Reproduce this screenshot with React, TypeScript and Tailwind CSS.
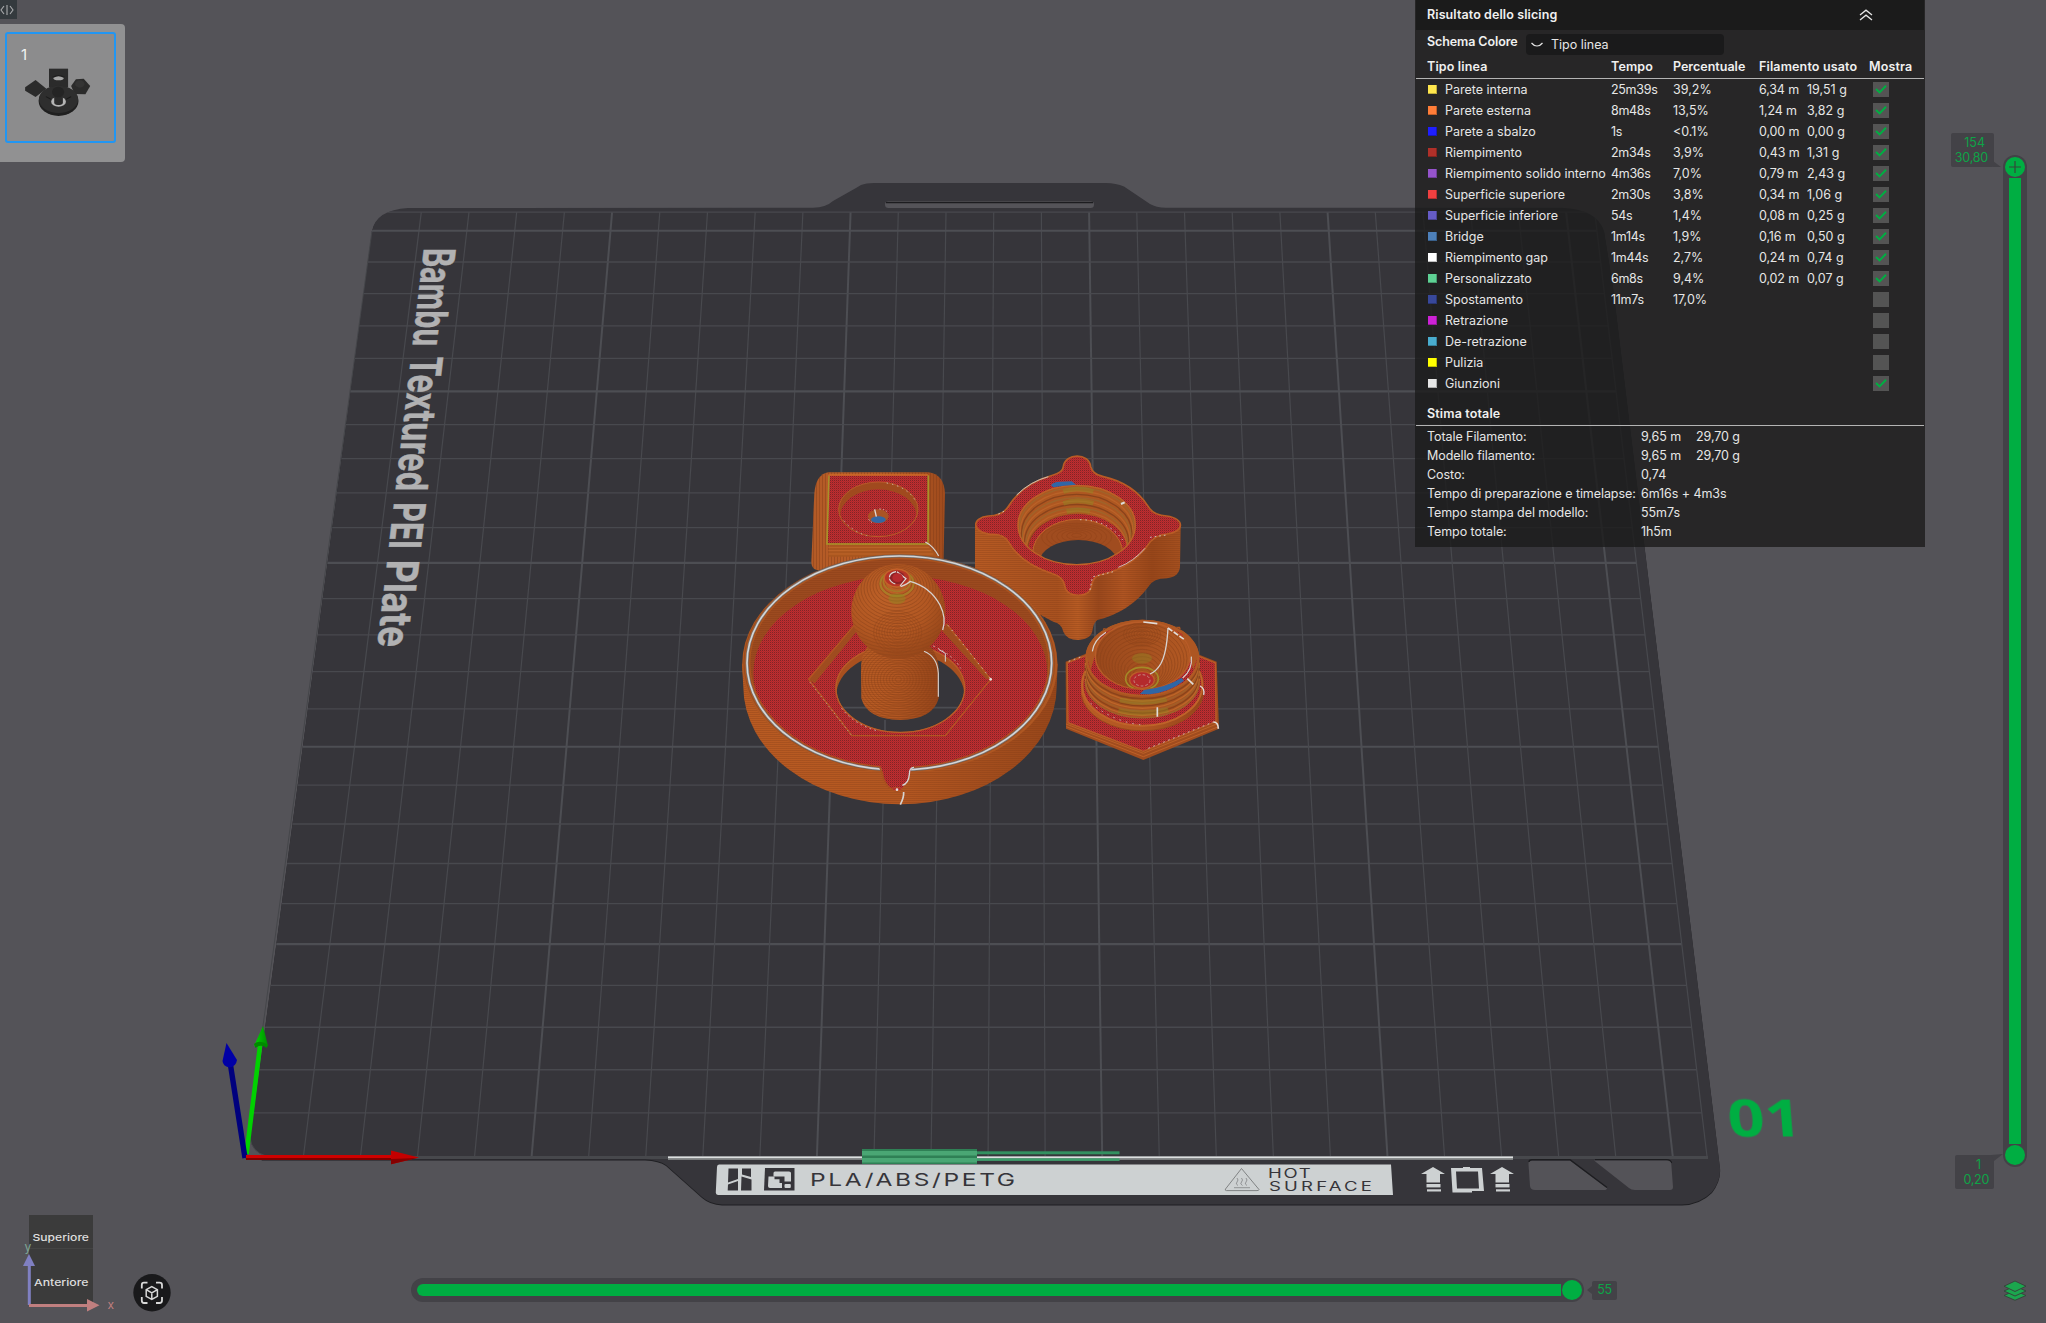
import React from "react";

const FONT = "font-['Inter','Liberation_Sans',sans-serif]";

/* ---------- Build plate ---------- */

const PLATE =
  "M372,231 Q376,210 408,208 L813,207.7 Q826,207.5 833,201 L856,188 L861,185 Q866,183 874,183 L1106,183 Q1116,183 1124,186.5 L1150,204 Q1156,207.7 1166,207.7 L1562,207.7 Q1597,209 1604,231 L1613,287 L1720,1168 Q1721,1180 1712,1192 Q1700,1204 1682,1204.5 L722,1204.5 Q710,1204 702,1197 L666,1165 Q659,1160 645,1159.5 L262,1159.5 Q248,1150 250,1140 Z";

function project(u: number, v: number): [number, number] {
  const w = 1 + 0.007665 * v;
  return [(246.3 + 57.06 * u + 7.836 * v) / w, (1156.7 - 35.27 * v) / w];
}

function Grid() {
  const lines: React.ReactNode[] = [];
  const marks = [...Array(26).keys(), 25.6];
  marks.forEach((m) => {
    const bold = m % 5 === 0 && m > 0;
    const [ax, ay] = project(m, 0);
    const [bx, by] = project(m, 25.6);
    if (m > 0)
      lines.push(
        <line key={`v${m}`} x1={ax} y1={ay} x2={bx} y2={by} stroke={bold ? "#4d4e53" : "#48494e"} strokeWidth={bold ? 2 : 1.2} />
      );
    const [cx, cy] = project(0, m);
    const [dx] = project(25.6, m);
    lines.push(
      <line key={`h${m}`} x1={cx} y1={cy} x2={dx} y2={cy} stroke={bold ? "#4d4e53" : "#48494e"} strokeWidth={bold ? 2.2 : 1.3} />
    );
  });
  return <g>{lines}</g>;
}

/* Words of the plate label: offset along the baseline and length. */
const LABEL: [string, number, number][] = [
  ["Bambu", 0, 99],
  ["Textured", 109, 136],
  ["PEI", 256, 47],
  ["Plate", 314, 88],
];

function Plate() {
  return (
    <g>
      <path d={PLATE} transform="translate(0,1)" fill="#1f1f22" />
      <path d={PLATE} fill="#36353a" />
      <path d="M372,231 L245,1157" stroke="#45464a" strokeWidth="1" />
      <path d="M250,1138 Q252,1152 266,1156 L246,1156 Z" fill="#545358" stroke="#46474b" />
      <g clipPath="url(#plate-clip)">
        <Grid />
      </g>
      <rect x="885" y="201" width="209" height="7" rx="3.5" fill="#545358" />
      <path d="M886,202.5 H1093" stroke="#1c1c1f" strokeWidth="1.6" />

      <g
        transform="matrix(-0.1165 0.993 -1 0 424 248)"
        fontFamily="Inter, sans-serif"
        fontWeight="700"
        fontSize="44"
        fill="#b1b1b2"
        stroke="#b1b1b2"
        strokeWidth="0.5"
      >
        {LABEL.map(([word, x, len]) => (
          <text key={word} x={x} y="0" textLength={len} lengthAdjust="spacingAndGlyphs">{word}</text>
        ))}
      </g>

      <path d="M245,1157.5 H1708" stroke="#47484c" strokeWidth="3" />
      <rect x="668" y="1156.4" width="845" height="2" fill="#dcdfdf" />
      <rect x="668" y="1158.4" width="845" height="1.4" fill="#8d9090" />

      <path d="M719,1164.5 H1391 L1393,1195 H718 Q715.5,1195 715.8,1192 L717,1167 Q717,1164.5 719,1164.5Z" fill="#cdd1d2" />
      <g fill="#36353a">
        <path d="M728.5,1168.5 H738 V1179 L728,1182.5Z M728,1184.5 L738,1181 V1190.5 H727.7Z M742,1168.5 H751 V1177 L742,1174.5Z M741.5,1176.5 L751.5,1179.5 V1190.5 H741Z" />
        <path d="M765,1168 H794.5 V1190.5 H764Z" />
      </g>
      <path d="M775,1171.5 H789 Q791,1171.5 791,1173 V1181.5 H784.5 V1176.5 H773.5 V1173 Q773.5,1171.5 775,1171.5Z" fill="#cdd1d2" />
      <path d="M768.5,1176.5 H774.5 V1179.3 H779.5 V1183 H782 V1188 H770 Q768,1188 768,1186Z" fill="#cdd1d2" />
      <rect x="784.5" y="1184" width="6.3" height="4" rx="1" fill="#cdd1d2" />
      <g fontFamily="Inter, sans-serif" fill="#36353a">
        <text transform="matrix(1.4 0 0 1 810 1186)" fontSize="17.5" textLength="146.5">PLA/ABS/PETG</text>
        <text transform="matrix(1.45 0 0 1 1268 1178.3)" fontSize="12.8" textLength="29.5">HOT</text>
        <text transform="matrix(1.45 0 0 1 1269 1190.6)" fontSize="12.8" textLength="71">SURFACE</text>
      </g>
      <g fill="none" stroke="#77797b" strokeWidth="0.9">
        <path d="M1241.5,1168.5 L1259,1189.5 Q1259,1190.6 1257,1190.6 H1226.5 Q1224.5,1190.4 1225.5,1189Z" />
        <path d="M1237,1178 q2,2 0,4 t1,3.5 M1241.5,1178 q2,2 0,4 t1,3.5 M1246,1178 q2,2 0,4 t1,3.5 M1234,1187.7 H1250" strokeWidth="0.7" />
      </g>
      <g fill="#cdd1d2">
        {[1433, 1502].map((x) => (
          <g key={x}>
            <path d={`M${x},1167 L${x + 12},1174 H${x + 7} V1182.5 H${x - 6.5} V1174 H${x - 12}Z`} />
            <rect x={x - 6.5} y="1184" width="14" height="3.4" />
            <rect x={x - 6} y="1189.3" width="14" height="2.2" />
          </g>
        ))}
        <path fillRule="evenodd" d="M1451,1168 H1463 V1167 H1470 V1168 H1482 L1484,1191 H1472 V1192.4 H1452.5Z M1456,1171.5 L1457,1188.5 H1479 L1478,1171.5Z" />
      </g>
      <path d="M1530,1160.5 H1570 L1607,1188 Q1607,1190 1604,1190 H1535 Q1530.5,1190 1530,1186 L1528.5,1164 Q1528.5,1160.5 1530,1160.5Z" fill="#545358" />
      <path d="M1529,1162 Q1529,1159.8 1532,1159.8 H1570 L1607,1187.5 M1595,1159.8 H1666 Q1671,1159.8 1671.5,1163" fill="none" stroke="#1d1d20" strokeWidth="1.4" />
      <path d="M1594,1160.5 H1667 Q1671,1160.5 1671.3,1164 L1673,1187 Q1673,1190 1670,1190 H1635 Q1631,1190 1629,1188Z" fill="#545358" />

      <rect x="862" y="1149" width="115" height="15" fill="#2f8055" />
      <rect x="862" y="1151" width="115" height="4.5" fill="#4aa674" />
      <rect x="862" y="1158" width="115" height="4.5" fill="#4aa674" />
      <rect x="977" y="1151.3" width="142.5" height="3" fill="#339060" />
      <rect x="977" y="1158.3" width="142.5" height="2.6" fill="#3f9d6c" />

      <text
        transform="matrix(1 0 0.08 1 1729 1136.5)"
        fontFamily="Open Sans, sans-serif"
        fontWeight="700"
        fontSize="51"
        textLength="74"
        lengthAdjust="spacingAndGlyphs"
        fill="#00ae42"
        className="blur-[0.6px]"
      >
        01
      </text>
    </g>
  );
}

function Axes() {
  return (
    <g>
      <path d="M246.5,1154 L260,1046" stroke="#00d200" strokeWidth="4.6" />
      <path d="M263,1026 L268,1046 L254,1046 Z" fill="url(#green-tip)" />
      <path d="M254,1044 Q260,1039 268,1045 L266.5,1048 Q261,1043 255.5,1048Z" fill="#008a00" />
      <path d="M245,1158 L230.5,1065" stroke="#00007e" strokeWidth="5.4" />
      <path d="M226.5,1043 L237,1060 Q236,1067 229,1067.5 Q223,1066 222.5,1061 Z" fill="#0000a6" />
      <rect x="246" y="1155" width="146" height="5" fill="#d00000" />
      <rect x="246" y="1158" width="146" height="2" fill="#7c0000" />
      <path d="M391,1150.5 L419,1157.5 L391,1164.3 Z" fill="#c40000" />
      <path d="M391,1159 L417,1158 L391,1164.3 Z" fill="#850000" />
    </g>
  );
}

/* ---------- Sliced models (drawn in a 3x local space) ---------- */

const RING_TOP =
  "M1030,80 C1035,38 1108,38 1112,80 Q1118,103 1150,110 Q1240,130 1285,200 Q1300,226 1340,228 C1396,236 1394,276 1340,282 Q1300,285 1280,320 Q1230,385 1140,405 Q1118,410 1114,440 C1110,475 1040,475 1035,440 Q1030,410 1000,402 Q900,370 865,305 Q850,280 810,283 C752,275 756,232 805,228 Q850,228 868,195 Q910,130 1000,105 Q1028,98 1030,80Z";

const RING_BODY =
  "M765,250 L765,420 L1000,545 Q1025,550 1030,575 Q1040,600 1075,600 Q1115,598 1118,568 Q1120,550 1132,540 Q1230,515 1285,440 Q1300,415 1340,415 Q1378,410 1380,380 L1382,255Z";

const BOX_BODY =
  "M325,97 H625 Q672,103 675,160 L670,390 H290 Q274,385 274,365 L283,160 Q288,103 325,97Z";

const DISH_BODY = "M66,672 L70,740 A470 353 0 0 0 1010,740 L1013,672Z";

const POST = "M442,620 Q422,650 423,690 L424,775 Q440,838 540,840 Q640,838 656,775 L656,690 Q656,650 632,620Z";

function Rings({ cx, cy, n, rx, ry, drift, color, sw }: { cx: number; cy: number; n: number; rx: number; ry: number; drift: number; color: string; sw: number }) {
  return (
    <g fill="none" stroke={color} strokeWidth={sw}>
      {Array.from({ length: n }, (_, i) => (
        <ellipse key={i} cx={cx} cy={cy + drift * (i + 1)} rx={rx * (i + 1)} ry={ry * (i + 1)} />
      ))}
    </g>
  );
}

function Models() {
  return (
    <g transform="translate(720,440) scale(0.33333)">
      {/* rounded box */}
      <path d={BOX_BODY} fill="url(#wall)" />
      <path d={BOX_BODY} fill="url(#vlines)" />
      <path d="M330,314 H622 L655,350 H325Z" fill="#a9561f" />
      <path d="M325,322 H628 M325,332 H634 M325,342 H640" stroke="#c0652a" strokeWidth="3" />
      <path d="M325,106 H622 L625,310 H322Z" fill="url(#red)" />
      <path d="M327,106 L321,312 H624 L625,106" fill="none" stroke="#a7922a" strokeWidth="5" />
      <path d="M325,105 H624" stroke="#cf6a28" strokeWidth="4" />
      <ellipse cx="475" cy="208" rx="119" ry="82" fill="#a04a1e" stroke="#b85a28" strokeWidth="3" />
      <g clipPath="url(#recess)">
        <ellipse cx="475" cy="230" rx="115" ry="82" fill="url(#red)" />
      </g>
      <path d="M500,129 Q560,140 585,180 M372,242 Q400,275 440,287" fill="none" stroke="#cfc9c6" strokeWidth="2.5" strokeDasharray="4 12" />
      <ellipse cx="475" cy="229" rx="31" ry="21" fill="#aa5424" />
      <ellipse cx="475" cy="239" rx="22" ry="10" fill="#3467a3" />
      <path d="M464,208 L469,230" stroke="#e0dcda" strokeWidth="4" />
      <path d="M446,238 Q452,248 462,249 M478,207 Q500,208 504,220" fill="none" stroke="#d9cfcb" strokeWidth="2.5" strokeDasharray="4 6" />
      <path d="M616,306 Q640,318 656,348" fill="none" stroke="#d4d2d0" strokeWidth="4" />

      {/* lobed ring */}
      <path d={RING_BODY} fill="url(#ringwall)" />
      <path d={RING_BODY} fill="url(#hlines)" />
      <path d={RING_TOP} fill="url(#red)" stroke="#b95b25" strokeWidth="5" />
      <path d="M890,165 Q930,125 985,110 M1195,382 Q1240,365 1275,325" fill="none" stroke="#d4d2d0" strokeWidth="2.5" />
      <path d="M1120,410 L1180,395 M1110,450 L1117,412 M835,222 L860,210 M1290,292 L1340,285" fill="none" stroke="#d6d2d0" strokeWidth="2.5" strokeDasharray="5 9" />
      <ellipse cx="1070" cy="255" rx="177" ry="120" fill="#ad5721" />
      <g clipPath="url(#bore)">
        <g fill="none" strokeWidth="4">
          {[0, 9, 18, 27, 36, 45, 54, 63, 72].map((d, i) => (
            <ellipse key={d} cx="1070" cy={262 + d} rx={172 - d * 0.35} ry={119 - d * 0.12} stroke={i % 3 === 2 ? "#8a431b" : i % 3 === 1 ? "#ba6228" : "#9f632a"} />
          ))}
        </g>
        <path d="M1030,155 Q1072,138 1120,155 M1030,190 Q1072,175 1120,190 M1040,215 Q1072,205 1110,215" fill="none" stroke="#8f8a24" strokeWidth="14" opacity=".45" />
        <ellipse cx="1073" cy="330" rx="148" ry="108" fill="url(#red)" />
        <ellipse cx="1073" cy="340" rx="135" ry="102" fill="#a04c1f" stroke="#c0662a" strokeWidth="3" />
        <Rings cx={1070} cy={285} n={7} rx={15} ry={6} drift={1} color="#8f431b" sw={1.5} />
        <ellipse cx="1075" cy="366" rx="116" ry="66" fill="#36353a" />
      </g>
      <ellipse cx="1070" cy="255" rx="176" ry="119" fill="none" stroke="#bd6228" strokeWidth="4" />
      <path d="M1080,239 Q1165,240 1208,300" fill="none" stroke="#d5cfcc" strokeWidth="3" strokeDasharray="4 12" />
      <path d="M993,136 Q1000,125 1020,125 L1055,124 L1068,134 Q1030,136 1000,142Z" fill="#2f66a5" />
      <path d="M1203,192 L1214,187" stroke="#dedede" strokeWidth="6" />

      {/* large dish */}
      <path d={DISH_BODY} fill="url(#dishwall)" />
      <path d={DISH_BODY} fill="url(#hlines)" />
      <ellipse cx="539.5" cy="672" rx="473" ry="327" fill="#ae5722" />
      <ellipse cx="538" cy="669" rx="466" ry="325" fill="none" stroke="#8c461d" strokeWidth="2" />
      <ellipse cx="538" cy="669" rx="452" ry="317" fill="#9c4a1f" />
      <g clipPath="url(#dish)">
        <ellipse cx="538" cy="669" rx="452" ry="317" fill="url(#hlines)" />
        <ellipse cx="541" cy="699" rx="441" ry="291" fill="url(#red)" />
      </g>
      <ellipse cx="538" cy="669" rx="449" ry="314" fill="none" stroke="#ac541f" strokeWidth="4" />
      <ellipse cx="538" cy="669" rx="457" ry="321" fill="none" stroke="#747170" strokeWidth="9" />
      <ellipse cx="538" cy="669" rx="457" ry="321" fill="none" stroke="#d6d6d6" strokeWidth="5" />
      <path d="M480,970 L487,1000 Q496,1045 531,1052 Q552,1045 552,1035 Q567,1028 567,1008 L580,970Z" fill="url(#red)" />
      <path d="M480,982 L487,1000 Q494,1045 531,1054 L545,1048" fill="none" stroke="#a9501f" strokeWidth="5" />
      <path d="M582,982 Q568,982 568,1003 Q566,1030 547,1036" fill="none" stroke="#d4d4d4" strokeWidth="4" />
      <ellipse cx="531" cy="1047" rx="14" ry="5" fill="#b0282c" stroke="#b85c28" strokeWidth="2" />
      <circle cx="531" cy="1049" r="4" fill="#e4dede" />
      <path d="M551,1056 Q552,1072 541,1094" fill="none" stroke="#d6d4d2" strokeWidth="5" />

      <path d="M264,718 L402,556 L415,568 L284,730Z" fill="#9f4c1f" />
      <path d="M814,718 L680,550 L666,572 L798,716Z" fill="#9f4c1f" />
      <path d="M402,556 L266,718 L396,887 H676 L812,718 L680,552" fill="none" stroke="#b45522" strokeWidth="4" />
      <path d="M270,727 L396,888" stroke="#c9a79c" strokeWidth="2.5" strokeDasharray="4 9" />
      <path d="M684,556 L812,716" stroke="#cdbbb4" strokeWidth="3" strokeDasharray="4 14" />
      <circle cx="812" cy="718" r="4" fill="#e8e4e2" />
      <ellipse cx="541" cy="745" rx="195" ry="133" fill="#a8501f" />
      <g clipPath="url(#hole)">
        <ellipse cx="541" cy="766" rx="192" ry="130" fill="#36353a" />
        <path d="M495,840 V880 M350,803 H735" stroke="#4b4c51" strokeWidth="5" />
      </g>
      <ellipse cx="541" cy="745" rx="193" ry="132" fill="none" stroke="#b95c28" strokeWidth="4" />
      <path d="M640,618 Q700,645 722,685 M365,805 Q400,852 470,872" fill="none" stroke="#cdc5c1" strokeWidth="3" strokeDasharray="4 11" />
      <path d="M656,628 L676,640 V665" fill="none" stroke="#d4d4d4" strokeWidth="3" />

      <path d={POST} fill="url(#post)" />
      <g clipPath="url(#postclip)">
        <Rings cx={535} cy={718} n={16} rx={9} ry={8} drift={0} color="#8f451b" sw={1.4} />
        <path d={POST} fill="url(#hlines)" />
      </g>
      <path d="M612,634 Q652,650 655,700 V770" fill="none" stroke="#d3d0ce" strokeWidth="3.5" />
      <ellipse cx="535" cy="514" rx="141" ry="142" fill="url(#ball)" />
      <g clipPath="url(#ballclip)">
        <Rings cx={531} cy={416} n={24} rx={9} ry={7} drift={2.6} color="#90461c" sw={1.8} />
        <Rings cx={533} cy={577} n={9} rx={8} ry={7} drift={0} color="#90461c" sw={1.4} />
        <ellipse cx="531" cy="430" rx="50" ry="38" fill="none" stroke="#a08a28" strokeWidth="6" opacity=".7" />
        <ellipse cx="531" cy="424" rx="41" ry="30" fill="none" stroke="#a87f28" strokeWidth="5" opacity=".8" />
        <ellipse cx="531" cy="476" rx="26" ry="16" fill="#8f8a22" opacity=".45" />
      </g>
      <ellipse cx="531" cy="414" rx="38" ry="27" fill="#b73426" stroke="#c4622a" strokeWidth="4" />
      <ellipse cx="531" cy="413" rx="24" ry="19" fill="#8c2226" />
      <path d="M531,395 L558,416 L540,438 M508,412 Q510,398 528,395 M508,416 Q512,428 526,432" fill="none" stroke="#dddcda" strokeWidth="3.5" />
      <ellipse cx="533" cy="413" rx="16" ry="13" fill="#b72a2e" />
      <path d="M542,440 Q566,430 570,424 Q630,440 660,495 Q680,535 668,570" fill="none" stroke="#d6d3d1" strokeWidth="4" />

      {/* threaded cup on hex base */}
      <path d="M1037,665 L1265,575 L1490,665 L1497,866 L1270,960 L1038,866Z" fill="#a04c1e" />
      <path d="M1038,852 L1270,940 L1495,850 M1039,860 L1270,950 L1496,860" fill="none" stroke="#bd6028" strokeWidth="3" />
      <path d="M1042,669 L1265,580 L1486,669 L1488,845 L1270,934 L1044,848Z" fill="url(#red)" stroke="#b95c28" strokeWidth="4" />
      <path d="M1285,925 L1480,846 M1046,664 L1090,648" stroke="#cbb9b3" strokeWidth="3" strokeDasharray="5 11" />
      <path d="M1480,846 Q1495,846 1495,866" fill="none" stroke="#e2dfdd" strokeWidth="5" />
      <path d="M1083,735 A184 130 0 0 1 1451,735 L1450,765 A184 120 0 0 1 1084,765Z" fill="url(#post)" />
      <path d="M1084,765 A184 120 0 0 0 1450,765" fill="none" stroke="#9a491c" strokeWidth="3" />
      <ellipse cx="1267" cy="735" rx="180" ry="122" fill="url(#red)" stroke="#bf6329" strokeWidth="6" />
      <path d="M1112,790 Q1190,850 1270,855" fill="none" stroke="#cfbab3" strokeWidth="3" strokeDasharray="4 16" />
      <path d="M1440,738 Q1455,744 1451,765" fill="none" stroke="#dddddd" strokeWidth="4" />
      <path d="M1096,655 L1094,715 Q1110,830 1267,833 Q1430,830 1441,715 L1438,655Z" fill="#a85420" />
      <g fill="none" strokeWidth="4">
        {[0, 8, 16, 24, 32, 40, 48, 56, 64].map((d, i) => (
          <path key={d} d={`M1096,${660 + d} A171 ${116 - d * 0.1} 0 0 0 1438,${660 + d}`} stroke={i % 3 === 0 ? "#8a431b" : i % 3 === 1 ? "#bd6629" : "#a0602a"} />
        ))}
      </g>
      <path d="M1200,780 Q1270,796 1340,778 M1195,812 Q1270,828 1345,810" fill="none" stroke="#8f8a24" strokeWidth="15" opacity=".4" />
      <ellipse cx="1267" cy="654" rx="171" ry="115" fill="#b15a24" />
      <ellipse cx="1267" cy="656" rx="163" ry="108" fill="url(#red)" />
      <path d="M1098,640 A170 113 0 0 1 1436,640 L1420,690 L1380,560 L1150,565 L1112,690Z" fill="#ad5622" />
      <ellipse cx="1268" cy="647" rx="142" ry="101" fill="url(#cup)" stroke="#b85c28" strokeWidth="4" />
      <g clipPath="url(#cupclip)">
        <Rings cx={1266} cy={716} n={18} rx={9} ry={7} drift={-4} color="#8a431b" sw={1.6} />
        <Rings cx={1266} cy={583} n={7} rx={8} ry={5} drift={0} color="#8a431b" sw={1.4} />
        <ellipse cx="1266" cy="655" rx="30" ry="16" fill="#8f8a22" opacity=".4" />
        <ellipse cx="1266" cy="716" rx="49" ry="34" fill="none" stroke="#a38a27" strokeWidth="5" />
      </g>
      <ellipse cx="1266" cy="720" rx="37" ry="25" fill="#b42a2c" stroke="#bd5e28" strokeWidth="4" />
      <ellipse cx="1266" cy="721" rx="24" ry="17" fill="none" stroke="#c99f95" strokeWidth="2.5" strokeDasharray="8 6" />
      <path d="M1260,762 L1272,750 Q1340,742 1384,714 L1392,722 Q1350,755 1290,763Z" fill="#2f66a5" />
      <path d="M1344,564 Q1340,640 1322,672 Q1308,695 1290,702" fill="none" stroke="#d6d3d1" strokeWidth="4" />
      <path d="M1344,564 L1392,598" stroke="#e0dddb" strokeWidth="5" strokeDasharray="16 5" />
      <path d="M1270,546 L1312,551 M1312,802 V830 M1402,716 L1420,733" stroke="#e0dddb" strokeWidth="5" />
      <path d="M1117,634 Q1122,600 1158,577 M1414,650 Q1418,690 1388,714" fill="none" stroke="#d6d3d1" strokeWidth="3.5" />
    </g>
  );
}

function Defs() {
  return (
    <defs>
      <clipPath id="plate-clip"><path d={PLATE} /></clipPath>
      <clipPath id="recess"><ellipse cx="475" cy="208" rx="117" ry="80" /></clipPath>
      <clipPath id="bore"><ellipse cx="1070" cy="255" rx="176" ry="119" /></clipPath>
      <clipPath id="dish"><ellipse cx="538" cy="669" rx="452" ry="317" /></clipPath>
      <clipPath id="hole"><ellipse cx="541" cy="745" rx="192" ry="131" /></clipPath>
      <clipPath id="postclip"><path d={POST} /></clipPath>
      <clipPath id="ballclip"><ellipse cx="535" cy="514" rx="140" ry="141" /></clipPath>
      <clipPath id="cupclip"><ellipse cx="1268" cy="647" rx="140" ry="99" /></clipPath>
      <pattern id="red" width="6" height="6" patternUnits="userSpaceOnUse">
        <rect width="6" height="6" fill="#c02d2f" />
        <rect width="3" height="3" fill="#802427" />
        <rect x="3" y="3" width="3" height="3" fill="#ab2a2d" />
      </pattern>
      <pattern id="hlines" width="6" height="6" patternUnits="userSpaceOnUse">
        <rect width="6" height="3" fill="#7c3a16" opacity=".28" />
      </pattern>
      <pattern id="vlines" width="9" height="9" patternUnits="userSpaceOnUse">
        <rect width="3" height="9" fill="#7c3a16" opacity=".4" />
      </pattern>
      <linearGradient id="wall"><stop offset="0" stopColor="#b35a26" /><stop offset=".5" stopColor="#b95e27" /><stop offset="1" stopColor="#a04b1d" /></linearGradient>
      <linearGradient id="ringwall"><stop offset="0" stopColor="#b65a23" /><stop offset=".4" stopColor="#a8511f" /><stop offset=".5" stopColor="#b85c24" /><stop offset=".6" stopColor="#9a481c" /><stop offset=".72" stopColor="#b05522" /><stop offset=".86" stopColor="#984619" /><stop offset="1" stopColor="#a5501f" /></linearGradient>
      <linearGradient id="dishwall"><stop offset="0" stopColor="#b95b22" /><stop offset=".5" stopColor="#b35721" /><stop offset="1" stopColor="#97461a" /></linearGradient>
      <linearGradient id="post"><stop offset="0" stopColor="#b95c24" /><stop offset=".5" stopColor="#b05622" /><stop offset="1" stopColor="#96451a" /></linearGradient>
      <radialGradient id="ball" cx=".4" cy=".35" r=".7"><stop offset="0" stopColor="#bd6128" /><stop offset=".6" stopColor="#b15722" /><stop offset="1" stopColor="#944519" /></radialGradient>
      <linearGradient id="cup"><stop offset="0" stopColor="#99481c" /><stop offset="1" stopColor="#b25923" /></linearGradient>
      <linearGradient id="green-tip"><stop offset="0" stopColor="#00d800" /><stop offset="1" stopColor="#008c00" /></linearGradient>
    </defs>
  );
}

/* ---------- Slicing result panel ---------- */

type Row = [string, string, string, string, string, string, boolean];

const ROWS: Row[] = [
  ["#ffe64d", "Parete interna", "25m39s", "39,2%", "6,34 m", "19,51 g", true],
  ["#ff7d38", "Parete esterna", "8m48s", "13,5%", "1,24 m", "3,82 g", true],
  ["#1f1fff", "Parete a sbalzo", "1s", "<0.1%", "0,00 m", "0,00 g", true],
  ["#b03029", "Riempimento", "2m34s", "3,9%", "0,43 m", "1,31 g", true],
  ["#9654cc", "Riempimento solido interno", "4m36s", "7,0%", "0,79 m", "2,43 g", true],
  ["#f04040", "Superficie superiore", "2m30s", "3,8%", "0,34 m", "1,06 g", true],
  ["#665cc7", "Superficie inferiore", "54s", "1,4%", "0,08 m", "0,25 g", true],
  ["#4d80ba", "Bridge", "1m14s", "1,9%", "0,16 m", "0,50 g", true],
  ["#ffffff", "Riempimento gap", "1m44s", "2,7%", "0,24 m", "0,74 g", true],
  ["#5ed194", "Personalizzato", "6m8s", "9,4%", "0,02 m", "0,07 g", true],
  ["#38489b", "Spostamento", "11m7s", "17,0%", "", "", false],
  ["#cd22d6", "Retrazione", "", "", "", "", false],
  ["#49adcf", "De-retrazione", "", "", "", "", false],
  ["#ffff00", "Pulizia", "", "", "", "", false],
  ["#e6e6e6", "Giunzioni", "", "", "", "", true],
];

const TOTALS: [string, string, string][] = [
  ["Totale Filamento:", "9,65 m", "29,70 g"],
  ["Modello filamento:", "9,65 m", "29,70 g"],
  ["Costo:", "0,74", ""],
  ["Tempo di preparazione e timelapse:", "6m16s + 4m3s", ""],
  ["Tempo stampa del modello:", "55m7s", ""],
  ["Tempo totale:", "1h5m", ""],
];

function ResultPanel() {
  return (
    <section className="absolute left-[1415px] top-0 h-[547px] w-[510px] whitespace-nowrap bg-[#1b1b1b]/80 text-[12.5px] text-[#e6e6e6]">
      <header className="mx-px flex h-[30px] items-center justify-between bg-[#1b1b1b] pl-[11px] pr-[51px] font-semibold tracking-[0.1px] text-[#f0f0f0]">
        <span>Risultato dello slicing</span>
        <svg width="14" height="12" viewBox="0 0 14 12" fill="none" stroke="#e4e4e4" strokeWidth="1.3">
          <path d="M1,6 L7,1.2 L13,6 M1,11 L7,6.2 L13,11" />
        </svg>
      </header>
      <div className="flex h-[27px] pl-3 pt-1">
        <span className="-mt-px h-[17px] w-[99px] font-semibold leading-[17px] tracking-[-0.1px] text-[#f0f0f0]">Schema Colore</span>
        <div className="flex h-[21px] w-[198px] items-center rounded bg-[#1a1a1b] pl-[5px] pt-px">
          <svg width="12" height="6" viewBox="0 0 12 6" fill="none" stroke="#e4e4e4" strokeWidth="1.2">
            <path d="M0.5,1 Q3,4 6,4 T11.5,1" />
          </svg>
          <span className="ml-2">Tipo linea</span>
        </div>
      </div>
      <div className="mx-px grid h-[22px] grid-cols-[184px_62px_86px_110px_1fr] items-center border-b border-[#b4b4b4] pl-[11px] font-semibold tracking-[0.15px] text-[#f0f0f0]">
        <span>Tipo linea</span>
        <span>Tempo</span>
        <span className="tracking-normal">Percentuale</span>
        <span>Filamento usato</span>
        <span>Mostra</span>
      </div>
      <div>
        {ROWS.map(([color, name, time, pct, len, weight, on]) => (
          <div key={name} className="grid h-[21px] grid-cols-[17px_166px_62px_86px_48px_66px_16px] items-center pl-[13px]">
            <i className="size-[9px] border-b border-r border-black/25" style={{ backgroundColor: color }} />
            <span className="pt-px">{name}</span>
            <span className="pt-px tracking-[-0.3px]">{time}</span>
            <span className="pt-px">{pct}</span>
            <span className="pt-px tracking-[-0.15px]">{len}</span>
            <span className="pt-px">{weight}</span>
            <i className="flex h-[15px] w-4 items-center justify-center bg-[#545454]">
              {on && (
                <svg width="12" height="9" viewBox="0 0 12 9" fill="none" stroke="#00ae42" strokeWidth="2">
                  <path d="M1,4 L4.6,7.4 L11,0.8" />
                </svg>
              )}
            </i>
          </div>
        ))}
      </div>
      <div className="mx-px mt-px flex h-[31px] items-center border-b border-[#b4b4b4] pl-[11px] pt-2 font-semibold tracking-[0.15px] text-[#f0f0f0]">Stima totale</div>
      <div className="pt-[2px]">
        {TOTALS.map(([label, a, b]) => (
          <div key={label} className="flex h-[19px] items-center pl-3 tracking-[-0.07px]">
            <span className="w-[214px]">{label}</span>
            <span className={b ? "w-[55px]" : ""}>{a}</span>
            <span>{b}</span>
          </div>
        ))}
      </div>
    </section>
  );
}

/* ---------- Overlays ---------- */

function PlateThumbnail() {
  return (
    <>
      <div className="absolute left-0 top-0 flex h-[19px] w-[17px] items-center bg-[#343a3e]">
        <svg width="14" height="12" viewBox="0 0 14 12" fill="none" stroke="#a9abad" strokeWidth="1.1">
          <path d="M4,2 L1,6 L4,10 M7,1 V11 M10,2 L13,6 L10,10" />
        </svg>
      </div>
      <div className="absolute left-0 top-6 h-[138px] w-[125px] rounded-r bg-[#919192] pl-[5px] pt-2">
        <div className="h-[111px] w-[111px] rounded-[3px] border-2 border-[#2196f3] bg-[#8c8c8d]">
          <svg width="106" height="106" viewBox="7 34 106 106">
            <text x="21" y="59.5" fontFamily="Inter, sans-serif" fontSize="15" fill="#f2f2f2">1</text>
            <g transform="scale(0.43365,0.33333)" fill="#2b2b2b">
              <path d="M113,206 H157 V262 H113Z" />
              <path d="M58,262 L82,240 L107,266 L82,291 L58,272Z" />
              <path d="M164,258 L175,238 L193,236 L208,258 L197,283 L172,282Z" />
              <ellipse cx="135" cy="234" rx="12" ry="7" fill="#a5a5a5" />
              <path d="M122,232 Q135,222 148,232" stroke="#1d1d1d" strokeWidth="4" fill="none" />
              <ellipse cx="135" cy="303" rx="46" ry="45" fill="#202020" />
              <ellipse cx="135" cy="298" rx="45" ry="41" fill="#2e2e2e" />
              <ellipse cx="135" cy="305" rx="17" ry="15" fill="#b5b5b5" />
              <rect x="125" y="285" width="20" height="30" rx="8" />
              <ellipse cx="134" cy="276" rx="14" ry="16" fill="#242424" />
              <path d="M118,298 L106,290 M152,298 L164,290" stroke="#1a1a1a" strokeWidth="3" />
              <circle cx="184" cy="252" r="11" fill="#343434" />
            </g>
          </svg>
        </div>
      </div>
    </>
  );
}

function LayerSlider() {
  return (
    <>
      <div className="absolute left-[2003px] top-[155px] flex h-[1012px] w-6 flex-col items-center rounded-full bg-[#434247] py-0.5">
        <span className="flex size-5 shrink-0 items-center justify-center rounded-full bg-[#00ae42]">
          <svg width="12" height="12" viewBox="0 0 12 12" stroke="#35463a" strokeWidth="1.2"><path d="M0,6 H12 M6,0 V12" /></svg>
        </span>
        <span className="my-px w-3 flex-1 bg-[#00ae42]" />
        <span className="size-5 shrink-0 rounded-full bg-[#00ae42]" />
      </div>
      <div className="absolute left-[1951px] top-[133px] h-[34px] w-[43px] rounded-[2px] bg-[#434247] text-[12.5px] leading-[15px] text-[#0ea447]">
        <svg className="absolute bottom-0 left-[42px]" width="8" height="6" viewBox="0 0 8 6"><path d="M0,0 L8,6 H0Z" fill="#434247" /></svg>
        <div className="pr-[9px] pt-[2px] text-right">154</div>
        <div className="pr-[6px] text-right tracking-[-0.2px]">30,80</div>
      </div>
      <div className="absolute left-[1955px] top-[1155px] h-[34px] w-[39px] rounded-[2px] bg-[#434247] text-[12.5px] leading-[15px] text-[#0ea447]">
        <svg className="absolute -top-px left-9" width="12" height="7" viewBox="0 0 12 7"><path d="M0,1 L12,0 L3,7Z" fill="#434247" /></svg>
        <div className="pr-[13px] pt-[2px] text-right">1</div>
        <div className="pr-[5px] text-right tracking-[-0.3px]">0,20</div>
      </div>
      <svg className="absolute left-[2003px] top-[1280px]" width="24" height="21" viewBox="0 0 24 21" fill="#1ba64e" stroke="#37453d" strokeWidth="1">
        <path d="M1,15.5 L12,10.5 L23,15.5 L12,20.3Z" />
        <path d="M1,11 L12,6 L23,11 L12,16Z" />
        <path d="M1,6.2 L12,1 L23,6.2 L12,11.5Z" />
      </svg>
    </>
  );
}

function MoveSlider() {
  return (
    <div className="absolute left-[411px] top-[1278px] flex h-6 items-center">
      <div className="flex h-6 w-[1173px] items-center rounded-full bg-[#434247] pl-1.5">
        <span className="h-3 w-[1144px] rounded-l-full bg-[#00ae42]" />
        <span className="ml-px size-5 rounded-full bg-[#00ae42]" />
      </div>
      <svg className="ml-[3px]" width="5" height="8" viewBox="0 0 5 8"><path d="M0,4 L5,0 V8Z" fill="#434247" /></svg>
      <span className="flex h-[19px] w-[25px] items-center justify-center rounded-[2px] bg-[#434247] text-[12.5px] tracking-[-0.3px] text-[#0ea447]">55</span>
    </div>
  );
}

function ViewCube() {
  return (
    <svg className="absolute left-0 top-[1200px]" width="200" height="123" viewBox="0 1200 200 123">
      <rect x="29" y="1215" width="64" height="89" fill="#3b3b3b" />
      <path d="M29,1248.5 H93" stroke="#444" />
      <g fontFamily="Inter, sans-serif" fontSize="9.5" fontWeight="500" fill="#dedede">
        <text x="32.5" y="1240.5" textLength="56.5" lengthAdjust="spacingAndGlyphs">Superiore</text>
        <text x="34" y="1285.5" textLength="54.5" lengthAdjust="spacingAndGlyphs">Anteriore</text>
      </g>
      <text x="24.5" y="1250.5" fontFamily="Inter, sans-serif" fontSize="12" fill="#7fa695">y</text>
      <text x="107.5" y="1309" fontFamily="Inter, sans-serif" fontSize="12" fill="#c07f7f">x</text>
      <path d="M29.3,1305 V1284 V1262" stroke="#8080c2" strokeWidth="3" />
      <path d="M29,1254 L35,1266 H23Z" fill="#8080c2" />
      <path d="M29,1305.5 H90" stroke="#c07f7f" strokeWidth="3" />
      <path d="M87,1299 L99.5,1305.3 L87,1311.5Z" fill="#c07f7f" />
      <circle cx="152" cy="1292.7" r="18.7" fill="#19191b" />
      <g fill="none" stroke="#d8d8d8" strokeWidth="1.8">
        <path d="M141.8,1288.5 V1285 Q141.8,1282.7 144,1282.7 H147.5 M156,1282.7 H159.5 Q162,1282.7 162,1285 V1288.5 M162,1297 V1300.5 Q162,1303 159.5,1303 H156 M147.5,1303 H144 Q141.8,1303 141.8,1300.5 V1297" />
        <path d="M151.8,1286.6 L157.4,1289.7 V1296.3 L151.8,1299.4 L146.2,1296.3 V1289.7Z M146.2,1289.7 L151.8,1292.8 L157.4,1289.7 M151.8,1292.8 V1299.4" strokeWidth="1.5" />
      </g>
    </svg>
  );
}

export default function App() {
  return (
    <main className={`relative h-[1323px] w-[2046px] overflow-hidden bg-[#545358] ${FONT}`}>
      <svg className="absolute inset-0" width="2046" height="1323" viewBox="0 0 2046 1323">
        <Defs />
        <Plate />
        <Axes />
        <Models />
      </svg>
      <PlateThumbnail />
      <ResultPanel />
      <LayerSlider />
      <MoveSlider />
      <ViewCube />
    </main>
  );
}
